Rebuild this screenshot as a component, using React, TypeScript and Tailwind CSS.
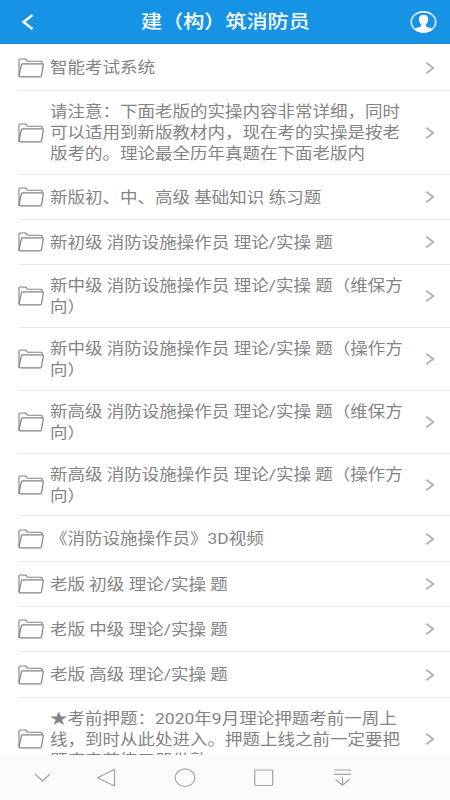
type Item = {
  lines: string[];
  height: string;
};

const items: Item[] = [
  { lines: ["智能考试系统"], height: "h-[46px]" },
  {
    lines: [
      "请注意：下面老版的实操内容非常详细，同时",
      "可以适用到新版教材内，现在考的实操是按老",
      "版考的。理论最全历年真题在下面老版内",
    ],
    height: "h-[84px]",
  },
  { lines: ["新版初、中、高级 基础知识 练习题"], height: "h-[45px]" },
  { lines: ["新初级 消防设施操作员 理论/实操 题"], height: "h-[45px]" },
  { lines: ["新中级 消防设施操作员 理论/实操 题（维保方", "向）"], height: "h-[63px]" },
  { lines: ["新中级 消防设施操作员 理论/实操 题（操作方", "向）"], height: "h-[63px]" },
  { lines: ["新高级 消防设施操作员 理论/实操 题（维保方", "向）"], height: "h-[63px]" },
  { lines: ["新高级 消防设施操作员 理论/实操 题（操作方", "向）"], height: "h-[62px]" },
  { lines: ["《消防设施操作员》3D视频"], height: "h-[46px]" },
  { lines: ["老版 初级 理论/实操 题"], height: "h-[45px]" },
  { lines: ["老版 中级 理论/实操 题"], height: "h-[45px]" },
  { lines: ["老版 高级 理论/实操 题"], height: "h-[46px]" },
  {
    lines: [
      "★考前押题：2020年9月理论押题考前一周上",
      "线，到时从此处进入。押题上线之前一定要把",
      "题库章节练习器做熟",
    ],
    height: "h-[83px]",
  },
];

function FolderIcon() {
  return (
    <svg className="w-[27px] h-5 shrink-0" viewBox="0 0 27 20" fill="none" stroke="#828282" strokeLinejoin="round">
      <path d="M1 18.2V2.2Q1 1 2.2 1H7.4L9.6 3.2H23.2Q24.2 3.2 24.2 4.2V5.8" strokeWidth="1.1" />
      <path d="M4.6 5.8H24.4Q25.5 5.8 25.3 6.8L23.5 17.8Q23.3 18.8 22.3 18.8H2Q0.9 18.8 1.1 17.7L3.4 6.8Q3.6 5.8 4.6 5.8Z" strokeWidth="1.2" />
    </svg>
  );
}

function Header() {
  return (
    <header className="h-11 shrink-0 bg-[#1793e6] flex items-center justify-between pl-[21px] pr-[13px] border-b border-[#2b86c8]">
      <svg className="w-7 h-4 mt-px" viewBox="0 0 28 16" fill="none" stroke="white" strokeWidth="2.4">
        <path d="M11.5 1L2.5 8L11.5 15" />
      </svg>
      <h1 className="mr-[9px] text-white text-[18.6px] leading-6 font-medium whitespace-nowrap scale-x-[1.135]">建（构）筑消防员</h1>
      <svg className="w-[27px] h-[22px] mt-px" viewBox="0 0 27 22">
        <ellipse cx="13.5" cy="11" rx="12.2" ry="10.2" fill="none" stroke="white" strokeWidth="1.4" />
        <path
          d="M13.5 3.8C10.3 3.8 8.7 5.8 8.9 8.5C9 10.8 10 12.6 11 13.4V15.2C9.5 16.2 6.5 16.4 4.7 18C7 20 10 21.2 13.5 21.2S20 20 22.3 18C20.5 16.4 17.5 16.2 16 15.2V13.4C17 12.6 18 10.8 18.1 8.5C18.3 5.8 16.7 3.8 13.5 3.8Z"
          fill="white"
        />
      </svg>
    </header>
  );
}

function Row({ item }: { item: Item }) {
  return (
    <li className={`${item.height} ml-[18px] pr-[15px] shrink-0 flex items-center border-b border-[#e9e9e9]`}>
      <FolderIcon />
      <div className="flex-1 ml-[5px] pt-[2px] text-[15.4px] leading-[21px] text-[#838383] origin-left scale-x-[1.137]">
        {item.lines.map((line) => (
          <p key={line} className="whitespace-nowrap">{line}</p>
        ))}
      </div>
      <svg className="w-[10px] h-3 shrink-0" viewBox="0 0 10 12" fill="none" stroke="#b0b0b0" strokeWidth="1.7">
        <path d="M1.2 0.8L8.4 6L1.2 11.2" />
      </svg>
    </li>
  );
}

function NavBar() {
  return (
    <nav className="h-[45px] shrink-0 bg-[#fbfbfb]">
      <svg className="w-[450px] h-[45px]" viewBox="0 0 450 45" fill="none" stroke="#a3a3a3" strokeWidth="1.2" strokeLinejoin="round">
        <path d="M35 19L42.5 26L50 19" />
        <path d="M114.5 14.3V31L97.5 22.7Z" />
        <ellipse cx="185" cy="22.7" rx="9.8" ry="8.8" />
        <rect x="254.7" y="15" width="18" height="15.5" rx="1" />
        <path d="M334 15H351M334 19.3H351M342.5 22V30M335.5 24.2L342.5 30.2L349.5 24.2" />
      </svg>
    </nav>
  );
}

export default function App() {
  return (
    <div className="w-[450px] h-[800px] flex flex-col overflow-hidden bg-white font-[Roboto,'Noto_Sans_CJK_SC',sans-serif]">
      <Header />
      <ul className="flex-1 min-h-0 overflow-hidden flex flex-col pt-px">
        {items.map((item) => (
          <Row key={item.lines.join("")} item={item} />
        ))}
      </ul>
      <NavBar />
    </div>
  );
}
